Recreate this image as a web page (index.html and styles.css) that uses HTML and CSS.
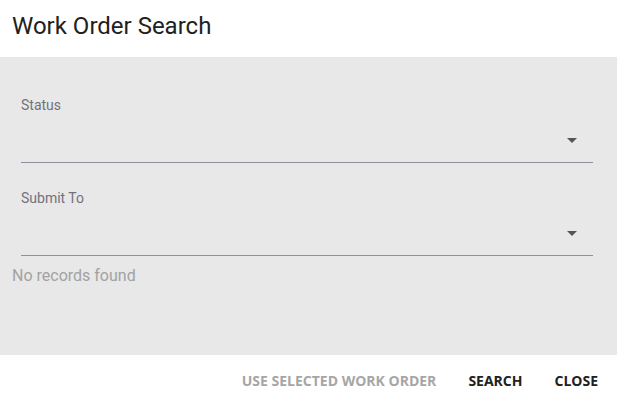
FILE: index.html
```html
<!DOCTYPE html>
<html>
<head>
<meta charset="utf-8">
<link rel="stylesheet" href="styles.css">
</head>
<body>
<div class="dialog">
  <header class="dialog-header">
    <h1 class="dialog-title">Work Order Search</h1>
  </header>
  <main class="dialog-body">
    <div class="field">
      <label class="field-label">Status</label>
      <div class="select">
        <span class="arrow"></span>
      </div>
    </div>
    <div class="field">
      <label class="field-label">Submit To</label>
      <div class="select">
        <span class="arrow"></span>
      </div>
    </div>
    <p class="empty">No records found</p>
  </main>
  <footer class="dialog-actions">
    <button class="btn btn-disabled">USE SELECTED WORK ORDER</button>
    <button class="btn">SEARCH</button>
    <button class="btn">CLOSE</button>
  </footer>
</div>
</body>
</html>
```
FILE: styles.css
```css
html, body {
  margin: 0;
  padding: 0;
  background: #ffffff;
}
.dialog {
  width: 617px;
  height: 400px;
  display: flex;
  flex-direction: column;
  font-family: Roboto, "Liberation Sans", sans-serif;
}
.dialog-header {
  height: 57px;
  display: flex;
  align-items: center;
  padding-left: 12px;
  box-sizing: border-box;
}
.dialog-title {
  margin: 0;
  font-size: 24px;
  font-weight: 400;
  color: #212121;
  line-height: 28px;
  position: relative;
  top: -3px;
}
.dialog-body {
  height: 298px;
  background: #e8e8e8;
  box-sizing: border-box;
  padding: 40px 24px 0 0;
  display: flex;
  flex-direction: column;
}
.field {
  margin-left: 21px;
  margin-bottom: 27px;
  display: flex;
  flex-direction: column;
}
.field:nth-of-type(2) {
  margin-bottom: 10px;
}
.field-label {
  font-size: 14px;
  line-height: 16px;
  color: #72727c;
}
.select {
  border-bottom: 1px solid #8f8e9b;
  display: flex;
  align-items: center;
  justify-content: flex-end;
  padding-right: 16px;
  padding-top: 6px;
  box-sizing: content-box;
  height: 43px;
}
.arrow {
  width: 0;
  height: 0;
  border-left: 5px solid transparent;
  border-right: 5px solid transparent;
  border-top: 5px solid #555555;
}
.empty {
  margin: 0 0 0 12px;
  font-size: 16px;
  line-height: 20px;
  color: #a2a2a2;
}
.dialog-actions {
  flex: 1;
  display: flex;
  justify-content: flex-end;
  align-items: center;
  padding: 5px 3px 0 0;
  box-sizing: border-box;
}
.btn {
  font-family: "Open Sans", "Liberation Sans", sans-serif;
  font-weight: 700;
  font-size: 14px;
  letter-spacing: 0;
  color: #212121;
  background: none;
  border: none;
  padding: 6px 16px;
  margin: 0;
}
.btn-disabled {
  color: #a6a6a6;
}
```
